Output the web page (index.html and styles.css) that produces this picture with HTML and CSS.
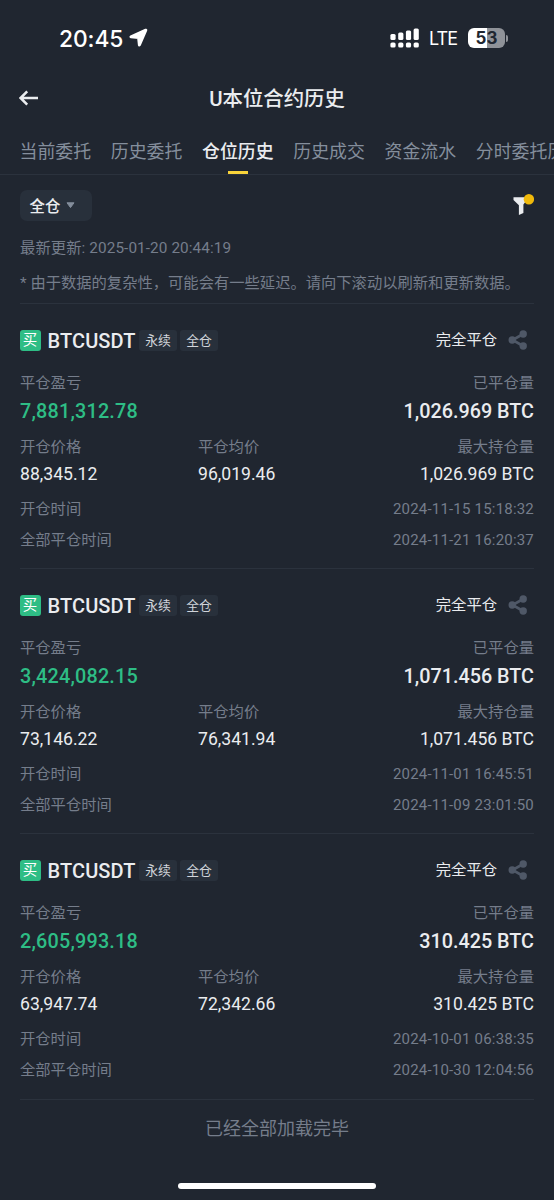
FILE: index.html
```html
<!DOCTYPE html>
<html lang="zh-CN">
<head>
  <meta charset="UTF-8" />
  <meta name="viewport" content="width=device-width, initial-scale=1.0"/>
  <title>U本位合约历史</title>
  <link rel="stylesheet" href="styles.css">
</head>
<body>

  <svg class="sprite" width="0" height="0">
    <symbol id="share" viewBox="0 0 20 20">
      <path d="M15.2 4L4.5 10L15.2 16" fill="none" stroke="currentColor" stroke-width="2.6"/>
      <circle cx="4.2" cy="10" r="3.7" fill="currentColor"/>
      <circle cx="15.2" cy="4" r="3.7" fill="currentColor"/>
      <circle cx="15.2" cy="16" r="3.7" fill="currentColor"/>
    </symbol>
  </svg>

  <div class="status-bar">
    <div class="clock">
      <span>20:45</span>
      <svg width="19" height="19" viewBox="0 0 19 19">
        <path d="M16.8 2.2L2 8.8L9.6 9.6L10.4 17Z" fill="#fff" stroke="#fff" stroke-width="3" stroke-linejoin="round"/>
      </svg>
    </div>
    <div class="indicators">
      <svg width="29" height="20" viewBox="0 0 29 20" fill="#fff">
        <rect x="0.4" y="6" width="5.2" height="6" rx="1.5"/>
        <rect x="8.2" y="4.6" width="5.2" height="7.4" rx="1.5"/>
        <rect x="15.9" y="2.6" width="5.2" height="9.4" rx="1.5"/>
        <rect x="23.6" y="0.4" width="5.2" height="11.6" rx="1.5"/>
        <rect x="0.4" y="14.4" width="5.2" height="5.2" rx="1.6"/>
        <rect x="8.2" y="14.4" width="5.2" height="5.2" rx="1.6"/>
        <rect x="15.9" y="14.4" width="5.2" height="5.2" rx="1.6"/>
        <rect x="23.6" y="14.4" width="5.2" height="5.2" rx="1.6"/>
      </svg>
      <span class="network">LTE</span>
      <span class="battery">53</span>
      <span class="battery-cap"></span>
    </div>
  </div>

  <header class="header">
    <svg class="back" width="20" height="16" viewBox="0 0 20 16">
      <path d="M19 8H2M8.2 1.3L1.6 8L8.2 14.7" fill="none" stroke="#eaecef" stroke-width="2.5"/>
    </svg>
    <h1>U本位合约历史</h1>
  </header>

  <nav class="tabs">
    <a class="tab">当前委托</a>
    <a class="tab">历史委托</a>
    <a class="tab active">仓位历史</a>
    <a class="tab">历史成交</a>
    <a class="tab">资金流水</a>
    <a class="tab">分时委托历史</a>
  </nav>

  <main>
    <div class="filters">
      <button class="select">全仓
        <svg width="9" height="7" viewBox="0 0 9 7"><path d="M1 0.8H8L4.5 5.6Z" fill="#848e9c" stroke="#848e9c" stroke-linejoin="round"/></svg>
      </button>
      <svg class="funnel" width="22" height="22" viewBox="0 0 22 22">
        <path d="M1.5 4.2H14V8L11.4 11.5V20L6.9 22V12.2L1.5 7Z" fill="#eaecef"/>
        <circle cx="16.9" cy="6.2" r="5.2" fill="#f0b90b"/>
      </svg>
    </div>

    <div class="notes">
      <p class="updated">最新更新: 2025-01-20 20:44:19</p>
      <p class="notice">* 由于数据的复杂性，可能会有一些延迟。请向下滚动以刷新和更新数据。</p>
    </div>

    <section class="position">
      <div class="position-head">
        <span class="side">买</span>
        <span class="symbol">BTCUSDT</span>
        <span class="tag">永续</span>
        <span class="tag">全仓</span>
        <span class="state">完全平仓</span>
        <svg class="share" width="20" height="20"><use href="#share"/></svg>
      </div>
      <div class="row labels"><span>平仓盈亏</span><span>已平仓量</span></div>
      <div class="row totals"><span class="profit">7,881,312.78</span><span>1,026.969 BTC</span></div>
      <div class="grid labels"><span>开仓价格</span><span>平仓均价</span><span>最大持仓量</span></div>
      <div class="grid values"><span>88,345.12</span><span>96,019.46</span><span>1,026.969 BTC</span></div>
      <div class="row time"><span>开仓时间</span><time>2024-11-15 15:18:32</time></div>
      <div class="row time"><span>全部平仓时间</span><time>2024-11-21 16:20:37</time></div>
    </section>

    <section class="position">
      <div class="position-head">
        <span class="side">买</span>
        <span class="symbol">BTCUSDT</span>
        <span class="tag">永续</span>
        <span class="tag">全仓</span>
        <span class="state">完全平仓</span>
        <svg class="share" width="20" height="20"><use href="#share"/></svg>
      </div>
      <div class="row labels"><span>平仓盈亏</span><span>已平仓量</span></div>
      <div class="row totals"><span class="profit">3,424,082.15</span><span>1,071.456 BTC</span></div>
      <div class="grid labels"><span>开仓价格</span><span>平仓均价</span><span>最大持仓量</span></div>
      <div class="grid values"><span>73,146.22</span><span>76,341.94</span><span>1,071.456 BTC</span></div>
      <div class="row time"><span>开仓时间</span><time>2024-11-01 16:45:51</time></div>
      <div class="row time"><span>全部平仓时间</span><time>2024-11-09 23:01:50</time></div>
    </section>

    <section class="position">
      <div class="position-head">
        <span class="side">买</span>
        <span class="symbol">BTCUSDT</span>
        <span class="tag">永续</span>
        <span class="tag">全仓</span>
        <span class="state">完全平仓</span>
        <svg class="share" width="20" height="20"><use href="#share"/></svg>
      </div>
      <div class="row labels"><span>平仓盈亏</span><span>已平仓量</span></div>
      <div class="row totals"><span class="profit">2,605,993.18</span><span>310.425 BTC</span></div>
      <div class="grid labels"><span>开仓价格</span><span>平仓均价</span><span>最大持仓量</span></div>
      <div class="grid values"><span>63,947.74</span><span>72,342.66</span><span>310.425 BTC</span></div>
      <div class="row time"><span>开仓时间</span><time>2024-10-01 06:38:35</time></div>
      <div class="row time"><span>全部平仓时间</span><time>2024-10-30 12:04:56</time></div>
    </section>

    <p class="end">已经全部加载完毕</p>
  </main>

  <div class="home-indicator"></div>

</body>
</html>
```
FILE: styles.css
```css
* {
  box-sizing: border-box;
}

body {
  margin: 0;
  height: 1200px;
  overflow: hidden;
  display: flex;
  flex-direction: column;
  background: #202630;
  color: #eaecef;
  font-family: Roboto, "Noto Sans CJK SC", sans-serif;
  font-size: 15.3px;
}

h1, p {
  margin: 0;
}

.sprite {
  display: none;
}

.status-bar {
  display: flex;
  justify-content: space-between;
  height: 75px;
  padding: 24px 46px 0 59px;
  color: #fff;
  font-family: Inter, sans-serif;
}

.clock {
  display: flex;
  align-items: center;
  gap: 6px;
  height: 28px;
  font-size: 22.8px;
  font-weight: 500;
  letter-spacing: -0.1px;
}

.clock svg {
  margin-top: -1px;
}

.indicators {
  display: flex;
  align-items: center;
  height: 28px;
}

.network {
  width: 29px;
  margin: 0 10px;
  font-size: 18px;
  font-weight: 400;
  letter-spacing: -0.9px;
}

.battery {
  width: 37px;
  height: 20px;
  border-radius: 6px;
  background: linear-gradient(to right, #fff 52%, #8f9298 52%);
  color: #202630;
  font-size: 17px;
  font-weight: 700;
  line-height: 20px;
  text-align: center;
}

.battery-cap {
  width: 2px;
  height: 7px;
  margin-left: 1px;
  border-radius: 0 2px 2px 0;
  background: #8f9298;
}

.header {
  display: grid;
  grid-template-columns: 60px 1fr 60px;
  align-items: center;
  height: 46px;
}

.back {
  margin-left: 19px;
}

h1 {
  margin-top: -2px;
  font-size: 20.4px;
  font-weight: 500;
  text-align: center;
}

.tabs {
  display: flex;
  gap: 19.7px;
  height: 54px;
  padding: 17px 0 0 19.5px;
  border-bottom: 1px solid #2b323d;
  color: #848e9c;
  font-size: 17.9px;
  line-height: 28px;
  white-space: nowrap;
  overflow: hidden;
}

.tab {
  flex: none;
}

.tab.active {
  display: flex;
  flex-direction: column;
  align-items: center;
  color: #eaecef;
  font-weight: 500;
}

.tab.active::after {
  content: "";
  width: 20px;
  height: 3px;
  margin-top: auto;
  background: #f8d33a;
}

main {
  padding: 0 20px;
}

.filters {
  display: flex;
  justify-content: space-between;
  padding-top: 15px;
}

.select {
  display: flex;
  align-items: center;
  gap: 6px;
  width: 72px;
  height: 31px;
  margin-left: -0.5px;
  padding: 0 0 1px 10px;
  border: 0;
  border-radius: 7px;
  background: #28303b;
  color: #eaecef;
  font: 500 15.4px Roboto, "Noto Sans CJK SC", sans-serif;
}

.funnel {
  margin-top: 3px;
}

.notes {
  height: 83px;
  padding-top: 17px;
  border-bottom: 1px solid #2b323d;
  color: #757d8b;
  line-height: 20px;
  white-space: nowrap;
}

.updated {
  letter-spacing: 0.1px;
}

.notice {
  margin-top: 15px;
}

.position {
  height: 265.2px;
  padding-top: 22px;
  border-bottom: 1px solid #2b323d;
}

.position-head {
  display: flex;
  align-items: center;
  height: 28px;
  margin-bottom: 18px;
}

.side {
  width: 21px;
  height: 21px;
  margin: 0 7px 0 -0.5px;
  border-radius: 3px;
  background: #2ebd85;
  color: #fff;
  font-size: 14.5px;
  line-height: 22px;
  text-align: center;
}

.symbol {
  width: 91.5px;
  padding-top: 1px;
  font-size: 20px;
  font-weight: 500;
  letter-spacing: 0.1px;
}

.tag {
  width: 38px;
  height: 21px;
  margin-right: 3px;
  border-radius: 3px;
  background: #28303b;
  color: #d0d4da;
  font-size: 12.8px;
  line-height: 21px;
  text-align: center;
}

.state {
  margin-left: auto;
  line-height: 26px;
}

.share {
  margin: 0 6px 0 11px;
  color: #4f5867;
}

.row {
  display: flex;
  justify-content: space-between;
}

.grid {
  display: grid;
  grid-template-columns: 178px 178px 1fr;
}

.grid span:last-child {
  text-align: right;
}

.labels {
  height: 21px;
  color: #757d8b;
  line-height: 22px;
}

.totals {
  margin: 6px 0 12px;
  font-size: 19.8px;
  font-weight: 500;
  line-height: 25px;
}

.profit {
  color: #2ebd85;
  letter-spacing: 0.2px;
}

.values {
  margin: 7px 0 15px;
  font-size: 17.6px;
  line-height: 20px;
}

.time {
  height: 20px;
  margin-bottom: 11px;
  color: #757d8b;
  line-height: 20px;
}

time {
  font-size: 15px;
  letter-spacing: 0.2px;
}

.end {
  padding-top: 15px;
  color: #757d8b;
  font-size: 18px;
  line-height: 28px;
  text-align: center;
}

.home-indicator {
  width: 198px;
  height: 6px;
  margin: auto auto 11px;
  border-radius: 3px;
  background: #fff;
}
```
